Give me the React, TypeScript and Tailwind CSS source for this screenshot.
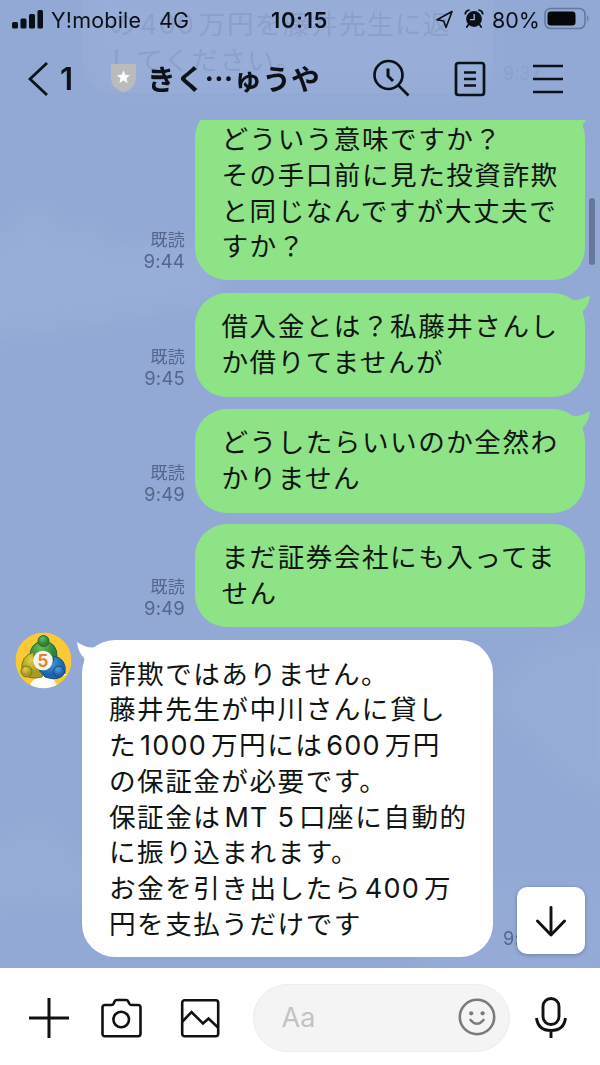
import { Fragment } from 'react';

interface SentMessage {
  time: string;
  lines: string[];
  tail?: boolean;
  className: string;
}

const sentMessages: SentMessage[] = [
  {
    time: '9:44',
    lines: ['どういう意味ですか？', 'その手口前に見た投資詐欺', 'と同じなんですが大丈夫で', 'すか？'],
    tail: true,
    className: '-mt-[14px] h-[174px]',
  },
  {
    time: '9:45',
    lines: ['借入金とは？私藤井さんし', 'か借りてませんが'],
    tail: true,
    className: 'mt-[13px] h-[104px]',
  },
  {
    time: '9:49',
    lines: ['どうしたらいいのか全然わ', 'かりません'],
    tail: true,
    className: 'mt-[12px] h-[104px]',
  },
  {
    time: '9:49',
    lines: ['まだ証券会社にも入ってま', 'せん'],
    className: 'mt-[11px] h-[103px]',
  },
];

const receivedLines = [
  '詐欺ではありません。',
  '藤井先生が中川さんに貸し',
  'た1000万円には600万円',
  'の保証金が必要です。',
  '保証金はMT 5口座に自動的',
  'に振り込まれます。',
  'お金を引き出したら400万',
  '円を支払うだけです',
];

// Latin runs are set in Inter with a little air around them
function Line({ text }: { text: string }) {
  const parts = text.split(/([A-Za-z0-9 ]+)/);
  return (
    <p className="h-[35.8px] whitespace-nowrap">
      {parts.map((part, i) =>
        i % 2 === 1 ? (
          <span key={i} className="mr-[4px] ml-[3px] font-['Inter'] text-[27px] tracking-[1.2px]">
            {part}
          </span>
        ) : (
          <Fragment key={i}>{part}</Fragment>
        ),
      )}
    </p>
  );
}

function Sky() {
  return (
    <svg className="absolute inset-0 h-full w-full" viewBox="0 0 600 1065" preserveAspectRatio="none">
      <defs>
        <filter id="soft" x="-30%" y="-30%" width="160%" height="160%">
          <feGaussianBlur stdDeviation="10" />
        </filter>
      </defs>
      <g fill="#9ab3da" opacity="0.5" filter="url(#soft)">
        <path d="M-20 240 Q10 235 20 215 Q45 195 58 225 Q75 245 82 228 Q98 215 104 240 Q125 255 145 238 Q190 240 220 260 L220 300 Q100 325 -20 340Z" />
        <path d="M520 665 Q550 640 575 642 L620 635 L620 800 Q560 790 535 740 Q490 720 495 690Z" opacity="0.8" />
        <path d="M-20 860 Q10 820 45 825 Q80 850 90 880 L90 905 Q30 900 -20 910Z" opacity="0.8" />
        <path d="M85 -10 H490 V90 H100Z" opacity="0.6" />
        <path d="M495 880 H600 V975 H400Z" opacity="0.6" />
      </g>
    </svg>
  );
}

function StatusBar() {
  return (
    <div className="flex h-[40px] items-center pl-[12px] font-['Inter'] text-[21.5px] text-[#0b0f17]">
      <svg width="31" height="20" viewBox="0 0 31 20" fill="currentColor" className="-mt-[2px]">
        <rect x="0" y="13" width="6" height="6.5" rx="1.5" />
        <rect x="8.5" y="9.5" width="6" height="10" rx="1.5" />
        <rect x="17" y="5" width="6" height="14.5" rx="1.5" />
        <rect x="25.5" y="1" width="5.5" height="18.5" rx="1.5" />
      </svg>
      <span className="ml-[8px] w-[108px] tracking-[0.2px] whitespace-nowrap">Y!mobile</span>
      <span className="w-[112px]">4G</span>
      <span className="w-[163px] text-[22px] font-semibold tracking-[0.6px] whitespace-nowrap">10:15</span>
      <svg width="20" height="20" viewBox="0 0 20 20" fill="none" stroke="currentColor" strokeWidth="1.6" strokeLinejoin="round">
        <path d="M18 1.5 L3 9.8 L9.7 11 L12 17.5Z" />
      </svg>
      <svg width="20" height="20" viewBox="0 0 20 20" fill="currentColor" className="ml-[10px] -mt-[3px]">
        <circle cx="10" cy="10" r="7.9" />
        <path d="M1.2 5.5 Q1.5 1.5 5.6 1.1 M18.8 5.5 Q18.5 1.5 14.4 1.1" fill="none" stroke="currentColor" strokeWidth="1.8" />
        <path d="M4.5 15.5 L2.8 18 M15.5 15.5 L17.2 18" stroke="currentColor" strokeWidth="1.8" strokeLinecap="round" />
        <path d="M10.2 5 V10.6 H6" fill="none" stroke="#96acd7" strokeWidth="1.4" />
      </svg>
      <span className="ml-[8px] w-[52px] text-[21.5px] whitespace-nowrap">80%</span>
      <svg width="46" height="23" viewBox="0 0 46 23" className="-mt-[3px]">
        <rect x="1" y="1.5" width="40" height="20" rx="5.5" fill="none" stroke="#66789d" strokeWidth="1.6" />
        <rect x="3.5" y="4.5" width="28" height="14" rx="3.2" fill="#05070b" />
        <path d="M43 8 Q46 11.5 43 15Z" fill="#66789d" />
      </svg>
    </div>
  );
}

function Header() {
  return (
    <header className="relative h-[120px] shrink-0 overflow-hidden">
      {/* message scrolled under the translucent header */}
      <div
        aria-hidden="true"
        className="absolute -top-[30px] left-[82px] h-[123px] w-[411px] rounded-[32px] bg-white/[0.03] pt-[35px] pl-[27px] text-[26.6px] leading-[35.8px] tracking-[1.4px] text-[#33466f]/12"
      >
        <Line text="の400万円を藤井先生に返" />
        <Line text="してください。" />
        <span className="absolute bottom-[1px] left-[421px] font-['Inter'] text-[18px] tracking-normal text-[#33466f]/8">9:37</span>
      </div>
      <div className="relative">
        <StatusBar />
        <div className="flex h-[78px] items-center pl-[27px] text-[#0d1119]">
          <svg width="22" height="36" viewBox="0 0 22 36" fill="none" stroke="currentColor" strokeWidth="2.8">
            <path d="M20 2 L3 18 L20 34" />
          </svg>
          <span className="ml-[11px] w-[50px] font-['Inter'] text-[31px] font-semibold">1</span>
          <svg width="27" height="30" viewBox="0 0 27 30" className="mr-[10px] -mt-[2px]">
            <path d="M3 1 H24 Q26 1 26 3 V15 Q26 25 13.5 29.5 Q1 25 1 15 V3 Q1 1 3 1Z" fill="#babbbd" />
            <path d="M13.5 7.5 L15.4 11.8 L20 12.2 L16.5 15.3 L17.6 19.9 L13.5 17.4 L9.4 19.9 L10.5 15.3 L7 12.2 L11.6 11.8Z" fill="#fff" />
          </svg>
          <h1 className="-mt-[3px] w-[226px] text-[28.8px] font-bold whitespace-nowrap">きく…ゅうや</h1>
          <svg width="38" height="38" viewBox="0 0 38 38" fill="none" stroke="currentColor" strokeWidth="2.7" className="-mt-[2px]">
            <circle cx="15.5" cy="16" r="14" />
            <path d="M25 26 L35.5 36.5" />
            <path d="M15 9.5 V17 L20 22" strokeWidth="3" />
          </svg>
          <svg width="32" height="36" viewBox="0 0 32 36" fill="none" stroke="currentColor" strokeWidth="2.7" className="ml-[43px]">
            <rect x="2" y="2" width="28" height="32" rx="2.5" />
            <path d="M10 11.5 H22 M10 18 H22 M10 24.5 H22" />
          </svg>
          <svg width="32" height="30" viewBox="0 0 32 30" stroke="currentColor" strokeWidth="2.7" className="ml-[46px]">
            <path d="M1 2 H31 M1 15 H31 M1 28 H31" />
          </svg>
        </div>
      </div>
    </header>
  );
}

function Sent({ time, lines, tail, className }: SentMessage) {
  return (
    <div className={`flex shrink-0 items-end justify-end pr-[15px] ${className}`}>
      <div className="mr-[10px] pb-[8px] text-right text-[17px] leading-[22px] tracking-[0.2px] text-[#56668b]">
        <p>既読</p>
        <p className="font-['Inter'] text-[18.5px]">{time}</p>
      </div>
      <div className="relative h-full w-[390px] rounded-[32px] bg-[#8de386] pt-[14px] pl-[26.5px]">
        {tail && (
          <svg className="absolute top-[2px] -right-[6px]" width="30" height="24" viewBox="0 0 30 24" fill="#8de386">
            <path d="M4 2 Q14 9 29 0 Q28 10 22 16 L20 24 L4 20Z" />
          </svg>
        )}
        {lines.map((line) => (
          <Line key={line} text={line} />
        ))}
      </div>
    </div>
  );
}

function Avatar() {
  return (
    <svg width="57" height="57" viewBox="0 0 57 57" className="mt-[-8px] ml-[14.5px] shrink-0">
      <defs>
        <clipPath id="avatar">
          <circle cx="28.5" cy="28.5" r="28" />
        </clipPath>
        <radialGradient id="green" cx="40%" cy="30%">
          <stop offset="0" stopColor="#6cba5c" />
          <stop offset="1" stopColor="#2c8639" />
        </radialGradient>
        <radialGradient id="gold" cx="40%" cy="30%">
          <stop offset="0" stopColor="#e1cf42" />
          <stop offset="1" stopColor="#a59b22" />
        </radialGradient>
        <radialGradient id="blue" cx="40%" cy="30%">
          <stop offset="0" stopColor="#4c9ee0" />
          <stop offset="1" stopColor="#1c65ae" />
        </radialGradient>
      </defs>
      <g clipPath="url(#avatar)">
        <rect width="57" height="57" fill="#fbc936" />
        <path d="M28.5 10 L51 43 L37 47 Q42 49 42 57 H15 Q15 49 20 47 L6 43Z" fill="#fdfdf5" />
        <g strokeWidth="1">
          <path d="M15 26 Q14 11 28 9 Q43 10 42 26 Q40 33 35 32 L20 30Z" fill="url(#green)" stroke="#236b2d" />
          <path d="M19 20 Q5 24 7 39 Q12 49 27 45 L30 38 Q17 34 19 20Z" fill="url(#gold)" stroke="#7b741c" />
          <path d="M39 24 Q52 27 50 41 Q44 50 30 45 L24 38 Q38 39 39 24Z" fill="url(#blue)" stroke="#174f89" />
          <circle cx="28.5" cy="9" r="5.5" fill="url(#green)" stroke="#236b2d" />
          <circle cx="11.5" cy="39.5" r="5.5" fill="url(#gold)" stroke="#7b741c" />
          <circle cx="44" cy="39.5" r="5.5" fill="url(#blue)" stroke="#174f89" />
        </g>
        <circle cx="28" cy="28.5" r="9.8" fill="#f6f4f2" />
        <text x="28" y="34.5" textAnchor="middle" fontFamily="Inter" fontSize="17" fontWeight="700" fill="#de852b" letterSpacing="0">
          5
        </text>
      </g>
    </svg>
  );
}

function Received() {
  return (
    <div className="mt-[13px] flex h-[317px] shrink-0 items-start">
      <Avatar />
      <div className="relative ml-[10.5px] h-full w-[411px] rounded-[33px] bg-white pt-[14.5px] pl-[27px]">
        <svg className="absolute top-[2px] -left-[6px]" width="30" height="24" viewBox="0 0 30 24" fill="#fff">
          <path d="M26 2 Q16 10 1 0 Q2 10 8 16 L10 24 L26 20Z" />
        </svg>
        {receivedLines.map((line) => (
          <Line key={line} text={line} />
        ))}
      </div>
      <span className="mt-[288px] ml-[10px] font-['Inter'] text-[18px] leading-[22px] tracking-[0.3px] text-[#56668b]">9:52</span>
    </div>
  );
}

function InputBar() {
  return (
    <footer className="relative flex h-[97px] shrink-0 items-start bg-white pt-[16px] text-[#111]">
      <svg width="40" height="40" viewBox="0 0 40 40" stroke="currentColor" strokeWidth="3" className="mt-[14px] ml-[29px]">
        <path d="M20 0 V40 M0 20 H40" />
      </svg>
      <svg width="42" height="42" viewBox="0 0 42 42" fill="none" stroke="currentColor" strokeWidth="2.6" strokeLinejoin="round" className="mt-[13px] ml-[31.5px]">
        <path d="M4 8 H10.5 Q12 8 12.7 6.5 L13.5 4.5 Q14.2 3 15.8 3 H25 Q26.6 3 27.3 4.5 L28.2 6.5 Q29 8 30.5 8 H37 Q39.5 8 39.5 10.5 V36.5 Q39.5 39.3 37 39.3 H4 Q1.5 39.3 1.5 36.5 V10.5 Q1.5 8 4 8Z" />
        <circle cx="20.2" cy="22.5" r="7.8" />
      </svg>
      <svg width="40" height="40" viewBox="0 0 40 40" fill="none" stroke="currentColor" strokeWidth="2.6" className="mt-[14px] ml-[37px]">
        <rect x="2.2" y="2.2" width="36" height="36" rx="2.5" />
        <path d="M2.5 23.5 L11.5 14 L23 25.5 L28.5 20.5 L38 29.5" />
      </svg>
      <div className="ml-[33px] flex h-[68px] w-[257px] items-center justify-between rounded-full border border-[#ececec] bg-[#f4f4f4] pr-[13px] pl-[28px]">
        <span className="font-['Inter'] text-[27px] text-[#c3c3c3]">Aa</span>
        <svg width="38" height="38" viewBox="0 0 38 38" fill="none" stroke="#7b7b7b" strokeWidth="2.6" className="-mt-[2px]">
          <circle cx="19" cy="19" r="17.2" />
          <path d="M12.5 22 Q19 29.5 25.5 22" strokeLinecap="round" />
          <circle cx="13.2" cy="15.3" r="2.1" fill="#7b7b7b" stroke="none" />
          <circle cx="24.6" cy="15.3" r="2.1" fill="#7b7b7b" stroke="none" />
        </svg>
      </div>
      <svg width="34" height="42" viewBox="0 0 34 42" fill="none" stroke="currentColor" strokeWidth="2.9" className="mt-[12px] ml-[24.5px]">
        <rect x="9" y="2.5" width="16" height="26" rx="8" />
        <path d="M2.5 22 Q4 34.5 17 34.5 Q30 34.5 31.5 22 M17 34.5 V42" />
      </svg>
      <button
        type="button"
        className="absolute -top-[81px] right-[15px] flex h-[67px] w-[68px] items-center justify-center rounded-[10px] bg-white shadow-[0_1px_4px_rgba(30,40,70,0.35)]"
      >
        <svg width="32" height="32" viewBox="0 0 32 32" fill="none" stroke="#111" strokeWidth="2.9" strokeLinecap="round" strokeLinejoin="round">
          <path d="M16 2.5 V30 M2.5 16 L16 30 L29.5 16" />
        </svg>
      </button>
    </footer>
  );
}

export default function App() {
  return (
    <div className="relative flex h-[1065px] w-[600px] flex-col overflow-hidden bg-[#93a9d5] font-['Noto_Sans_CJK_JP',sans-serif]">
      <Sky />
      <Header />
      <main className="relative flex h-[848px] shrink-0 flex-col overflow-hidden text-[26.6px] leading-[35.8px] tracking-[1.5px] text-[#101511]">
        {sentMessages.map((message, i) => (
          <Sent key={i} {...message} />
        ))}
        <Received />
        <div className="absolute top-[78px] right-[5px] h-[67px] w-[6px] rounded-full bg-[#667899]" />
      </main>
      <InputBar />
    </div>
  );
}
